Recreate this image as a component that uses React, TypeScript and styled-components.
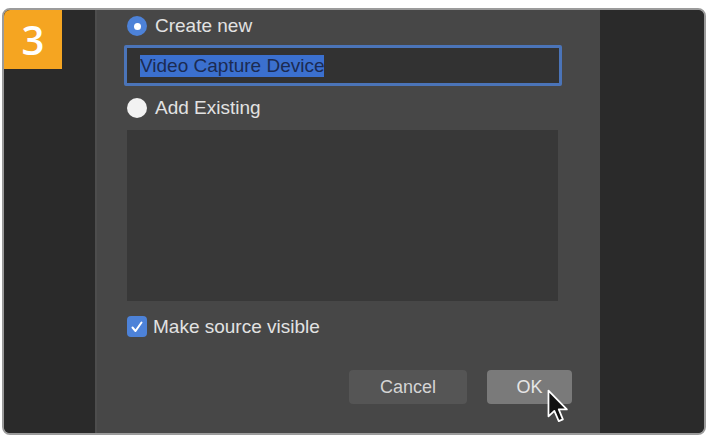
import React from 'react'
import styled, { createGlobalStyle } from 'styled-components';

const GlobalStyle = createGlobalStyle`
  html, body {
    margin: 0;
    padding: 0;
    background: #ffffff;
  }
  body {
    font-family: "Liberation Sans", Arial, sans-serif;
  }
`;

const App = () => {
    return (
        <Page>
            <GlobalStyle />
            <Frame>
                <SideColumn>
                    <StepBadge>3</StepBadge>
                </SideColumn>

                <Dialog>
                    <OptionRow>
                        <Radio checked />
                        <Label>Create new</Label>
                    </OptionRow>

                    <NameInput>
                        <Selected>Video Capture Device</Selected>
                    </NameInput>

                    <OptionRow>
                        <Radio />
                        <Label>Add Existing</Label>
                    </OptionRow>

                    <SourceList />

                    <CheckRow>
                        <CheckBox>
                            <svg width="14" height="14" viewBox="0 0 14 14">
                                <path d="M2.5 7.5 L5.5 11 L11.5 2.5" fill="none" stroke="#ffffff" strokeWidth="2" strokeLinecap="round" strokeLinejoin="round" />
                            </svg>
                        </CheckBox>
                        <Label>Make source visible</Label>
                    </CheckRow>

                    <ButtonRow>
                        <DialogButton>Cancel</DialogButton>
                        <DialogButton primary>
                            OK
                            <Cursor width="25" height="37" viewBox="0 0 17 25">
                                <path d="M1 1 L1 18.5 L5 14.8 L8 21.8 L10.8 20.6 L8 13.8 L13.5 13.8 Z" fill="#111" stroke="#fff" strokeWidth="1.2" strokeLinejoin="round" />
                            </Cursor>
                        </DialogButton>
                    </ButtonRow>
                </Dialog>

                <SideColumn />
            </Frame>
        </Page>
    )
}

const Page = styled.div`
  padding: 8px 2px 0 2px;
  width: 708px;
  height: 442px;
  box-sizing: border-box;
`;

const Frame = styled.div`
  width: 704px;
  height: 427px;
  box-sizing: border-box;
  border: 2px solid #9b9b9b;
  border-radius: 8px;
  overflow: hidden;
  display: grid;
  grid-template-columns: 91px 505px 1fr;
  background: #2a2a2a;
`;

const SideColumn = styled.div`
  background: #2a2a2a;
  padding-top: 0;
`;

const StepBadge = styled.div`
  width: 58px;
  height: 59px;
  background: #f5a521;
  color: #ffffff;
  font-family: "Open Sans", "Liberation Sans", sans-serif;
  font-size: 40px;
  font-weight: 600;
  display: flex;
  align-items: center;
  justify-content: center;
  line-height: 1;
`;

const Dialog = styled.div`
  background: #474747;
  border-left: 2px solid #4d4d4d;
  padding: 6px 0 0 30px;
  display: flex;
  flex-direction: column;
  align-items: flex-start;
  color: #e4e4e4;
`;

const OptionRow = styled.div`
  display: flex;
  align-items: center;
  gap: 8px;
  height: 20px;
`;

const Radio = styled.span<{ checked?: boolean }>`
  width: 20px;
  height: 20px;
  border-radius: 50%;
  box-sizing: border-box;
  background: ${p => (p.checked ? '#4d82d8' : '#f2f2f2')};
  display: flex;
  align-items: center;
  justify-content: center;

  &::after {
    content: '';
    display: ${p => (p.checked ? 'block' : 'none')};
    width: 7px;
    height: 7px;
    border-radius: 50%;
    background: #ffffff;
  }
`;

const Label = styled.span`
  font-size: 19px;
  color: #e2e2e2;
  line-height: 20px;
`;

const NameInput = styled.div`
  margin: 9px 0 12px -3px;
  width: 438px;
  height: 41px;
  box-sizing: border-box;
  border: 3px solid #4b74b8;
  border-radius: 2px;
  background: #323232;
  display: flex;
  align-items: center;
  padding-left: 13px;
`;

const Selected = styled.span`
  background: #3b70cf;
  color: #1b2b52;
  font-size: 19px;
  line-height: 22px;
`;

const SourceList = styled.div`
  margin-top: 12px;
  width: 431px;
  height: 171px;
  background: #383838;
`;

const CheckRow = styled.div`
  margin-top: 15px;
  display: flex;
  align-items: center;
  gap: 6px;
  height: 21px;
`;

const CheckBox = styled.span`
  width: 20px;
  height: 21px;
  border-radius: 4px;
  background: #4d82d8;
  display: flex;
  align-items: center;
  justify-content: center;
`;

const ButtonRow = styled.div`
  margin-top: 33px;
  margin-left: 222px;
  display: flex;
  gap: 20px;
`;

const DialogButton = styled.button<{ primary?: boolean }>`
  position: relative;
  height: 34px;
  width: ${p => (p.primary ? '85px' : '118px')};
  border: none;
  border-radius: 4px;
  background: ${p => (p.primary ? '#7a7a7a' : '#555555')};
  color: ${p => (p.primary ? '#e6e6e6' : '#d4d4d4')};
  font-family: "Liberation Sans", Arial, sans-serif;
  font-size: 18px;
  padding: 0;
`;

const Cursor = styled.svg`
  position: absolute;
  left: 60px;
  top: 19px;
`;

export default App
